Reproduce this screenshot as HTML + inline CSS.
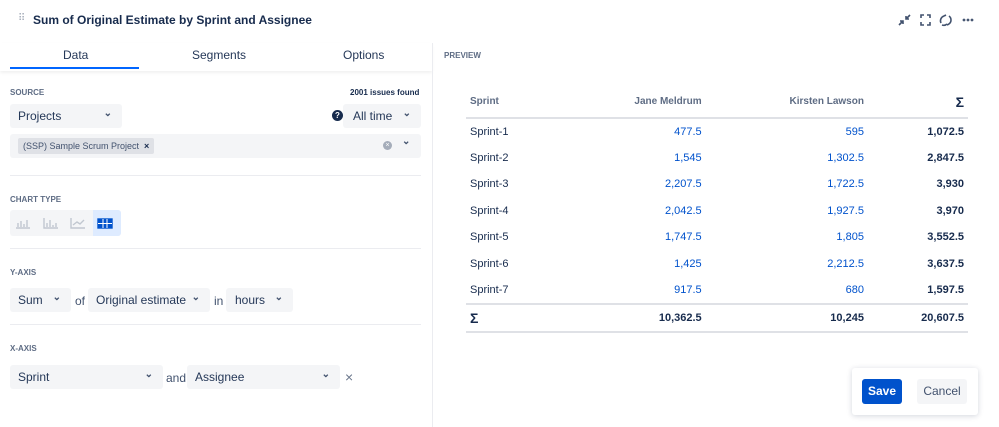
<!DOCTYPE html>
<html><head><style>
*{box-sizing:border-box;margin:0;padding:0}
body{width:999px;height:427px;background:#fff;font-family:"Liberation Sans",sans-serif;color:#172b4d;position:relative;overflow:hidden;font-size:12px}
.a{position:absolute}
.dd{position:absolute;background:#f4f5f7;border-radius:3px;height:24px;line-height:24px;font-size:12px;padding-left:8px;color:#253858}
.dd .c{position:absolute;right:10px;top:-2px;font-size:10px;color:#42526e;font-weight:bold}
.lab{position:absolute;font-size:8px;font-weight:bold;color:#5e6c84;left:10px}
.hr{position:absolute;left:10px;width:411px;height:1px;background:#ebecf0}
table{position:absolute;left:466px;top:86px;width:502px;border-collapse:collapse;font-size:11px}
td,th{height:26.5px;padding:0 4px}
th{font-size:10px;color:#5e6c84;font-weight:bold;height:32px;border-bottom:2px solid #dfe1e6}
td.n{text-align:right;color:#0052cc}
td.b{text-align:right;font-weight:bold}
tr.s td{border-top:2px solid #dfe1e6;font-weight:bold;color:#172b4d;height:28px;border-bottom:2px solid #dfe1e6}
</style></head><body>
<div class="a" style="left:18px;top:13px;color:#a5adba;font-size:10px">⠿</div>
<div class="a" style="left:33px;top:13px;font-size:12px;font-weight:bold;color:#172b4d">Sum of Original Estimate by Sprint and Assignee</div>
<svg class="a" style="left:897px;top:12px" width="80" height="16" viewBox="0 0 80 16" fill="none" stroke="#42526e" stroke-width="1.6">
<path d="M2 13L6 9M3 9h3v3M13 3L9 7M12 7H9V4"/>
<path d="M24 6V3h3M30 3h3v3M33 10v3h-3M27 13h-3v-3"/>
<path d="M47 4a5 5 0 0 0-3 7M45 13a5 5 0 0 0 5-1M52 12a5 5 0 0 0 0-8M47 4l2-1M52 12l-2 1"/>
<circle cx="67" cy="8" r=".6"/><circle cx="71" cy="8" r=".6"/><circle cx="75" cy="8" r=".6"/>
</svg>
<div class="a" style="left:0;top:43px;width:432px;height:28px;box-shadow:0 2px 3px rgba(0,0,0,.06)"></div>
<div class="a" style="left:63px;top:48px;color:#253858">Data</div>
<div class="a" style="left:192px;top:48px;color:#253858">Segments</div>
<div class="a" style="left:343px;top:48px;color:#253858">Options</div>
<div class="a" style="left:10px;top:67px;width:129px;height:2px;background:#0065ff"></div>
<div class="a" style="left:432px;top:43px;width:1px;height:384px;background:#ebecf0"></div>
<div class="lab" style="top:88px">SOURCE</div>
<div class="a" style="left:350px;top:88px;font-size:8px;font-weight:bold;color:#172b4d">2001 issues found</div>
<div class="dd" style="left:10px;top:104px;width:112px">Projects<span class="c">⌄</span></div>
<div class="a" style="left:332px;top:110px;width:11px;height:11px;border-radius:50%;background:#172b4d;color:#fff;font-size:8px;font-weight:bold;text-align:center;line-height:11px">?</div>
<div class="dd" style="left:343px;top:104px;width:78px;padding-left:10px">All time<span class="c">⌄</span></div>
<div class="dd" style="left:10px;top:134px;width:411px"></div>
<div class="a" style="left:18px;top:138px;height:16px;background:#dfe1e6;border-radius:2px;padding:0 5px;line-height:16px;font-size:9px;color:#42526e">(SSP) Sample Scrum Project &nbsp;<b style="color:#172b4d">×</b></div>
<div class="a" style="left:383px;top:141px;width:9px;height:9px;border-radius:50%;background:#a5adba;color:#fff;font-size:7px;text-align:center;line-height:9px">×</div>
<div class="a" style="left:402px;top:136px;font-size:10px;font-weight:bold;color:#42526e">⌄</div>
<div class="hr" style="top:175px"></div>
<div class="lab" style="top:195px">CHART TYPE</div>
<div class="a" style="left:10px;top:210px;width:111px;height:26px;background:#f4f5f7;border-radius:3px"></div>
<div class="a" style="left:93px;top:210px;width:28px;height:26px;background:#deebff;border-radius:0 3px 3px 0"></div>
<svg class="a" style="left:14px;top:215px" width="105" height="16" fill="none" stroke="#c1c7d0" stroke-width="1.4">
<path d="M2 13h14M4 12V8M7 12V6M10 12V9M13 12V5"/>
<path d="M30 3v10h14M33 12V8M36 12V5M39 12V10M42 12V8"/>
<path d="M57 3v10h14M59 10l4-3 3 2 4-4"/>
<rect x="84" y="4" width="14" height="9" fill="#0052cc" stroke="#0052cc"/>
<path d="M84 8.5h14M89 4v9M93 4v9" stroke="#fff" stroke-width="1"/>
</svg>
<div class="hr" style="top:248px"></div>
<div class="lab" style="top:268px">Y-AXIS</div>
<div class="dd" style="left:10px;top:288px;width:61px">Sum<span class="c">⌄</span></div>
<div class="a" style="left:75px;top:294px;color:#42526e">of</div>
<div class="dd" style="left:88px;top:288px;width:122px">Original estimate<span class="c">⌄</span></div>
<div class="a" style="left:214px;top:294px;color:#42526e">in</div>
<div class="dd" style="left:226px;top:288px;width:67px;padding-left:9px">hours<span class="c">⌄</span></div>
<div class="hr" style="top:324px"></div>
<div class="lab" style="top:344px">X-AXIS</div>
<div class="dd" style="left:10px;top:365px;width:153px">Sprint<span class="c">⌄</span></div>
<div class="a" style="left:166px;top:371px;color:#42526e">and</div>
<div class="dd" style="left:187px;top:365px;width:153px">Assignee<span class="c">⌄</span></div>
<div class="a" style="left:345px;top:369px;color:#6b778c;font-size:14px">×</div>
<div class="a" style="left:444px;top:51px;font-size:8px;font-weight:bold;color:#5e6c84">PREVIEW</div>
<table>
<tr><th style="text-align:left">Sprint</th><th style="text-align:right">Jane Meldrum</th><th style="text-align:right">Kirsten Lawson</th><th style="text-align:right;font-size:14px;color:#172b4d">Σ</th></tr>
<tr><td>Sprint-1</td><td class="n">477.5</td><td class="n">595</td><td class="b">1,072.5</td></tr>
<tr><td>Sprint-2</td><td class="n">1,545</td><td class="n">1,302.5</td><td class="b">2,847.5</td></tr>
<tr><td>Sprint-3</td><td class="n">2,207.5</td><td class="n">1,722.5</td><td class="b">3,930</td></tr>
<tr><td>Sprint-4</td><td class="n">2,042.5</td><td class="n">1,927.5</td><td class="b">3,970</td></tr>
<tr><td>Sprint-5</td><td class="n">1,747.5</td><td class="n">1,805</td><td class="b">3,552.5</td></tr>
<tr><td>Sprint-6</td><td class="n">1,425</td><td class="n">2,212.5</td><td class="b">3,637.5</td></tr>
<tr><td>Sprint-7</td><td class="n">917.5</td><td class="n">680</td><td class="b">1,597.5</td></tr>
<tr class="s"><td style="font-size:14px">Σ</td><td class="b">10,362.5</td><td class="b">10,245</td><td class="b">20,607.5</td></tr>
</table>
<div class="a" style="left:852px;top:368px;width:126px;height:47px;background:#fff;border-radius:3px;box-shadow:0 1px 6px rgba(9,30,66,.18)"></div>
<div class="a" style="left:862px;top:379px;width:40px;height:25px;background:#0052cc;border-radius:3px;color:#fff;font-weight:bold;text-align:center;line-height:25px">Save</div>
<div class="a" style="left:917px;top:379px;width:50px;height:25px;background:#f4f5f7;border-radius:3px;color:#42526e;text-align:center;line-height:25px">Cancel</div>
</body></html>
